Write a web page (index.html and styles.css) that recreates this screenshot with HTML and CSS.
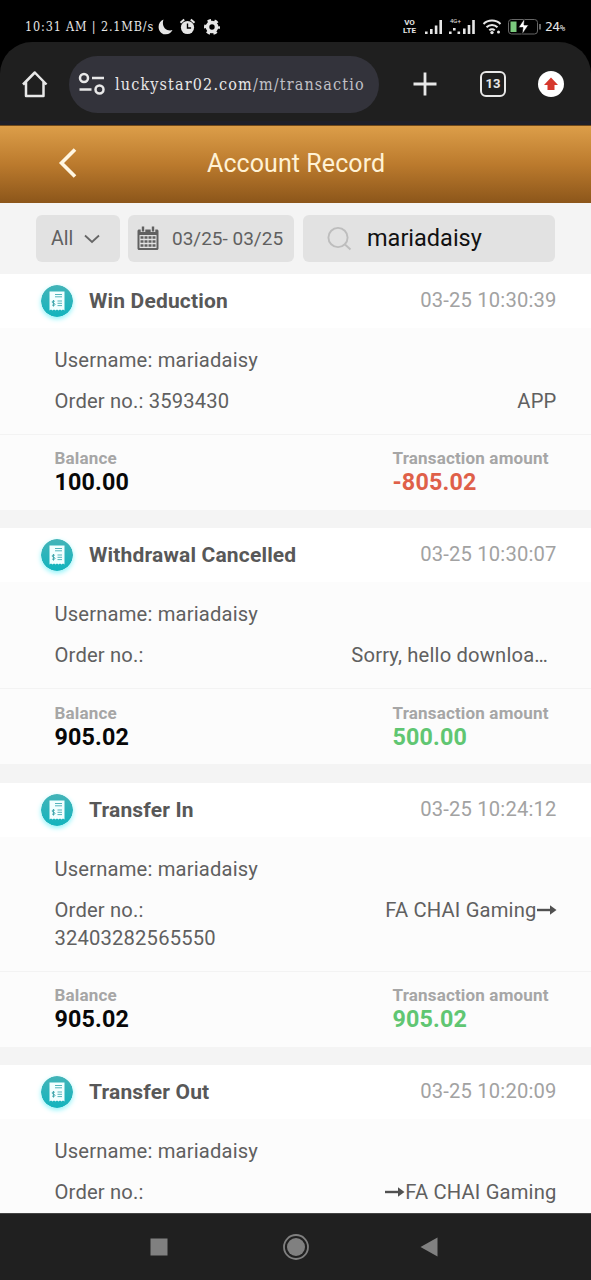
FILE: index.html
```html
<!DOCTYPE html>
<html lang="en">
<head>
<meta charset="utf-8">
<title>Account Record</title>
<link rel="stylesheet" href="styles.css">
</head>
<body>
<svg class="defs" width="0" height="0" aria-hidden="true">
  <defs>
    <linearGradient id="teal" x1="0" y1="0" x2="0" y2="1"><stop offset="0" stop-color="#43b4b8"/><stop offset="1" stop-color="#12b4be"/></linearGradient>
    <symbol id="receipt" viewBox="0 0 32 32">
      <circle cx="16" cy="16" r="16" fill="url(#teal)"/>
      <path d="M8.500 6.500h15v19l-1.500-1-1.500 1-1.500-1-1.500 1-1.500-1-1.500 1-1.500-1-1.500 1-1.500-1-1.500 1z" fill="#f2ffff"/>
      <path d="M14 9.500h7M14 11.800h7M16.500 16h4.500M16.500 18.300h4.500M16.500 20.600h4.500" stroke="#55b5bb" stroke-width="1"/>
      <path d="M13.800 16.400c-.8-.7-2.700-.6-2.700.6 0 1.500 2.900.9 2.900 2.400 0 1.200-2.100 1.300-3 .5M12.500 15v6.600" fill="none" stroke="#39a3a9" stroke-width=".9"/>
    </symbol>
  </defs>
</svg>
<div class="screen">
  <div class="status">
    <span class="clock">10:31 AM | 2.1MB/s</span>
    <svg class="status-left" width="65" height="18" viewBox="0 0 65 18" fill="#e6e6e6">
      <path d="M6.500 1.500C-.5 4 0 15.500 8 16.300c4 .3 6.500-2 7.500-4.300-6 2-11.500-3.500-9-10.500z"/>
      <circle cx="30.500" cy="9.500" r="6.600"/>
      <path d="M23.500 4.800l3.700-3.300M37.500 4.800l-3.700-3.300" stroke="#e6e6e6" stroke-width="2"/>
      <path d="M30.500 5.500v4.500h3.600" fill="none" stroke="#000" stroke-width="1.400"/>
      <circle cx="55" cy="9" r="4.500" fill="none" stroke="#e6e6e6" stroke-width="3.600"/>
      <circle cx="55" cy="9" r="6.500" fill="none" stroke="#e6e6e6" stroke-width="3" stroke-dasharray="3.400 3.406" stroke-dashoffset="1.700"/>
    </svg>
    <span class="volte"><span>VO</span><span>LTE</span></span>
    <svg class="signals" width="120" height="20" viewBox="0 0 120 20">
      <g fill="#e6e6e6">
        <path d="M2 14.500h2.600v2.500H2zM7 12h2.600v5H7zM11.800 8.500h2.600V17h-2.600zM16.400 3h2.600v14h-2.600z"/>
        <path d="M26 14.500h2.600v2.500H26zM30 11h2.600v2.600H30zM34.500 14.500h2.600v2.500h-2.600zM40 11.500h2.600V17H40zM44.700 8h2.600v9h-2.600zM49.200 3h2.600v14h-2.600z"/>
      </g>
      <text x="27" y="6" class="net">4G+</text>
      <g fill="none" stroke="#e6e6e6" stroke-width="2">
        <path d="M60.500 7c4.500-4.600 12.500-4.600 17 0M63.500 10.300c3-3 8-3 11 0M66.300 13.400c1.400-1.500 4-1.500 5.400 0"/>
      </g>
      <circle cx="69" cy="15.600" r="1.700" fill="#e6e6e6"/><circle cx="75.500" cy="15" r="1.500" fill="#e6e6e6"/>
      <rect x="85.500" y="2.500" width="29" height="14.500" rx="3" fill="none" stroke="#666"/>
      <rect x="87.500" y="4.500" width="6" height="10.500" fill="#7bca7d"/>
      <path d="M117 7v5.500" stroke="#666" stroke-width="2"/>
      <path d="M101.500 1.500l-6 9h4.500l-1 7 6.500-9.500h-4.500z" fill="#fff" stroke="#000" stroke-width=".6"/>
    </svg>
    <span class="charge">24<small>%</small></span>
  </div>

  <div class="browser">
    <svg class="home" width="28" height="30" viewBox="0 0 28 30" fill="none" stroke="#e8e8e8" stroke-width="2.500" stroke-linejoin="round"><path d="M2 15.500L13.800 3.500l11.700 12M5 13v14h17.500V13"/></svg>
    <div class="address">
      <svg width="27" height="24" viewBox="0 0 27 24" fill="none" stroke="#e8e8e8" stroke-width="2.500"><circle cx="6" cy="6" r="4"/><path d="M14 6h12M1.500 17.500h12"/><circle cx="21.500" cy="17.500" r="4"/></svg>
      <span class="url">luckystar02.com<span class="path">/m/transactio</span></span>
    </div>
    <svg class="plus" width="24" height="24" viewBox="0 0 24 24" stroke="#e8e8e8" stroke-width="2.800"><path d="M12 .5v23M.5 12h23"/></svg>
    <span class="tabs">13</span>
    <span class="update"><svg width="26" height="26" viewBox="0 0 26 26"><path d="M13 6.500l7 7.500h-3.500v5h-7v-5H6z" fill="#d5372c"/></svg></span>
  </div>

  <header class="titlebar">
    <svg class="back" width="20" height="32" viewBox="0 0 20 32" fill="none" stroke="#fff6e2" stroke-width="3.600"><path d="M17 2.500L3.500 16 17 29.500"/></svg>
    <h1>Account Record</h1>
  </header>

  <div class="filters">
    <div class="filter all"><span>All</span><svg width="16" height="10" viewBox="0 0 16 10" fill="none" stroke="#666" stroke-width="1.800"><path d="M1 1.500l7 6.500 7-6.500"/></svg></div>
    <div class="filter date">
      <svg width="22" height="25" viewBox="0 0 22 25"><path d="M2 3.500h18c.8 0 1.500.7 1.500 1.500v17.500c0 .8-.7 1.500-1.500 1.500H2c-.8 0-1.500-.7-1.500-1.500V5c0-.8.7-1.500 1.500-1.500z" fill="#606060"/><path d="M2.500 9h17v13h-17z" fill="#e2e2e2"/><path d="M3.500 11.500h15M3.500 15.500h15M3.500 19.500h15" stroke="#606060" stroke-width="2.600" stroke-dasharray="3 1"/><path d="M6 1v5M16 1v5" stroke="#e2e2e2" stroke-width="4.600"/><path d="M6 .5v5M16 .5v5" stroke="#606060" stroke-width="2.400"/></svg>
      <span>03/25- 03/25</span>
    </div>
    <div class="filter search">
      <svg width="25" height="25" viewBox="0 0 25 25" fill="none" stroke="#bdbdbd" stroke-width="1.900"><circle cx="11" cy="11.500" r="9.600"/><path d="M18 18.500l5.500 5"/></svg>
      <span>mariadaisy</span>
    </div>
  </div>

  <main class="records">
    <article class="card">
      <div class="head"><svg class="icon"><use href="#receipt"/></svg><h2>Win Deduction</h2><time>03-25 10:30:39</time></div>
      <div class="body"><p>Username: mariadaisy</p><div class="order"><p>Order no.: 3593430</p><p>APP</p></div></div>
      <div class="totals"><div><label>Balance</label><b>100.00</b></div><div><label>Transaction amount</label><b class="minus">-805.02</b></div></div>
    </article>
    <article class="card">
      <div class="head"><svg class="icon"><use href="#receipt"/></svg><h2>Withdrawal Cancelled</h2><time>03-25 10:30:07</time></div>
      <div class="body"><p>Username: mariadaisy</p><div class="order"><p>Order no.:</p><p class="cut">Sorry, hello downloa…</p></div></div>
      <div class="totals"><div><label>Balance</label><b>905.02</b></div><div><label>Transaction amount</label><b class="plus-amount">500.00</b></div></div>
    </article>
    <article class="card">
      <div class="head"><svg class="icon"><use href="#receipt"/></svg><h2>Transfer In</h2><time>03-25 10:24:12</time></div>
      <div class="body"><p>Username: mariadaisy</p><div class="order"><p>Order no.:<br>32403282565550</p><p>FA CHAI Gaming<svg class="arrow" viewBox="0 0 20 12"><path d="M0 5h14" stroke="#505050" stroke-width="2.400"/><path d="M13 .3L19.500 5 13 9.700z" fill="#505050"/></svg></p></div></div>
      <div class="totals"><div><label>Balance</label><b>905.02</b></div><div><label>Transaction amount</label><b class="plus-amount">905.02</b></div></div>
    </article>
    <article class="card">
      <div class="head"><svg class="icon"><use href="#receipt"/></svg><h2>Transfer Out</h2><time>03-25 10:20:09</time></div>
      <div class="body"><p>Username: mariadaisy</p><div class="order"><p>Order no.:</p><p><svg class="arrow" viewBox="0 0 20 12"><path d="M0 5h14" stroke="#505050" stroke-width="2.400"/><path d="M13 .3L19.500 5 13 9.700z" fill="#505050"/></svg>FA CHAI Gaming</p></div></div>
    </article>
  </main>

  <nav class="navbar">
    <svg width="18" height="18" viewBox="0 0 18 18"><path d="M.5 .5h17v17H.5z" fill="#808080"/></svg>
    <svg width="26" height="28" viewBox="0 0 26 28"><circle cx="13" cy="14" r="12" fill="none" stroke="#808080" stroke-width="1.800"/><circle cx="13" cy="14" r="9" fill="#808080"/></svg>
    <svg width="18" height="20" viewBox="0 0 18 20"><path d="M17.500.5v19L.5 10z" fill="#808080"/></svg>
  </nav>
</div>
</body>
</html>
```
FILE: styles.css
```css
* { box-sizing: border-box; }
body { margin: 0; background: #000; font-family: Roboto, "Liberation Sans", sans-serif; }
h1, h2, p { margin: 0; }
svg { display: block; flex: none; }
.defs { position: absolute; }
.screen { width: 591px; height: 1280px; display: flex; flex-direction: column; overflow: hidden; }

.status { height: 42px; flex: none; display: flex; align-items: center; padding: 11px 0 0 25px; color: #e6e6e6; }
.clock { width: 132px; font: 12.500px "DejaVu Serif", serif; font-stretch: condensed; letter-spacing: .85px; white-space: nowrap; }
.volte { display: flex; flex-direction: column; align-items: center; width: 17px; margin-left: 179px; font-size: 8px; line-height: 8px; font-weight: 700; }
.signals { margin-left: 5px; }
.net { font-size: 6px; fill: #e6e6e6; }
.charge { margin-left: 2px; font: 13px "DejaVu Sans Mono", monospace; letter-spacing: -.5px; }
.charge small { font-size: 9px; }

.browser { height: 83px; flex: none; display: flex; align-items: center; padding: 5px 0 0 21px; background: #1f1f1f; border-bottom: 4px solid #1e1f29; border-radius: 32px 32px 0 0; }
.address { width: 310px; height: 57px; margin-left: 20px; border-radius: 29px; background: #33333b; display: flex; align-items: center; padding: 0 8px 0 9px; color: #e8e8e8; }
.url { margin-left: 10px; width: 256px; overflow: hidden; white-space: nowrap; font: 16px "DejaVu Serif", serif; font-stretch: condensed; letter-spacing: 1.150px; }
.path { color: #c0c0c6; }
.plus { margin-left: 34px; }
.tabs { width: 26px; height: 26px; margin-left: 43px; border: 2.500px solid #e8e8e8; border-radius: 6px; color: #e8e8e8; font-size: 13px; font-weight: 700; line-height: 22px; text-align: center; }
.update { width: 26px; height: 26px; margin-left: 32px; border-radius: 50%; background: #fff; }

.titlebar { height: 78px; flex: none; display: flex; align-items: center; padding: 0 0 3px 58px; background: linear-gradient(#dc9e49, #bb7a2d 50%, #8c561a); border-top: 1px solid #70491b; }
.titlebar h1 { margin-left: 129px; font-size: 25px; font-weight: 400; letter-spacing: .08px; color: #fff2d5; white-space: nowrap; }

.filters { height: 71px; flex: none; display: flex; gap: 8px; padding: 12px 36px; background: #f4f4f4; }
.filter { height: 47px; border-radius: 6px; background: #e2e2e2; display: flex; align-items: center; color: #606060; font-size: 19.500px; white-space: nowrap; }
.filter span { padding-bottom: 1px; }
.all { width: 84px; padding-left: 15px; gap: 11px; }
.date { width: 166px; padding-left: 9px; gap: 13px; font-size: 19px; }
.search { width: 252px; margin-left: 1px; padding-left: 24px; gap: 15px; color: #111; font-size: 23.500px; }

.records { flex: 1; min-height: 0; overflow: hidden; background: #f4f4f4; display: flex; flex-direction: column; gap: 18.500px; }
.card { flex: none; background: #fcfcfc; color: #606060; font-size: 20.200px; letter-spacing: .17px; }
.head { height: 54px; display: flex; align-items: center; padding: 0 34.500px 0 41px; background: #fff; }
.icon { width: 32px; height: 32px; border-radius: 50%; box-shadow: 0 2px 5px #8ff4fa; }
.head h2 { margin-left: 16px; font-size: 21px; font-weight: 700; color: #585858; }
.head time { margin-left: auto; padding-bottom: 2px; color: #a2a2a2; }
.body { height: 106px; padding: 18px 34.500px 0 54.500px; line-height: 28.300px; }
.card:nth-child(3) .body { height: 134.300px; }
.order { display: flex; justify-content: space-between; margin-top: 12.800px; }
.order .cut { margin-right: 8.500px; }
.arrow { display: inline-block; width: 20px; height: 12px; }
.totals { height: 75.800px; border-top: 1px solid #f3f3f3; display: grid; grid-template-columns: 338px 1fr; padding: 11.300px 0 0 54.500px; }
.totals label { display: block; height: 24px; font-size: 17px; line-height: 24px; font-weight: 700; color: #a6a6a6; }
.totals b { display: block; font-size: 23.300px; line-height: 25.500px; color: #080808; }
.totals .minus { color: #df6049; }
.totals .plus-amount { color: #60c672; }

.navbar { height: 67px; flex: none; display: flex; align-items: center; padding-left: 150px; background: #202020; border-top: 1px solid #444; }
.navbar svg:nth-child(2) { margin-left: 115px; }
.navbar svg:nth-child(3) { margin-left: 111px; }
```
